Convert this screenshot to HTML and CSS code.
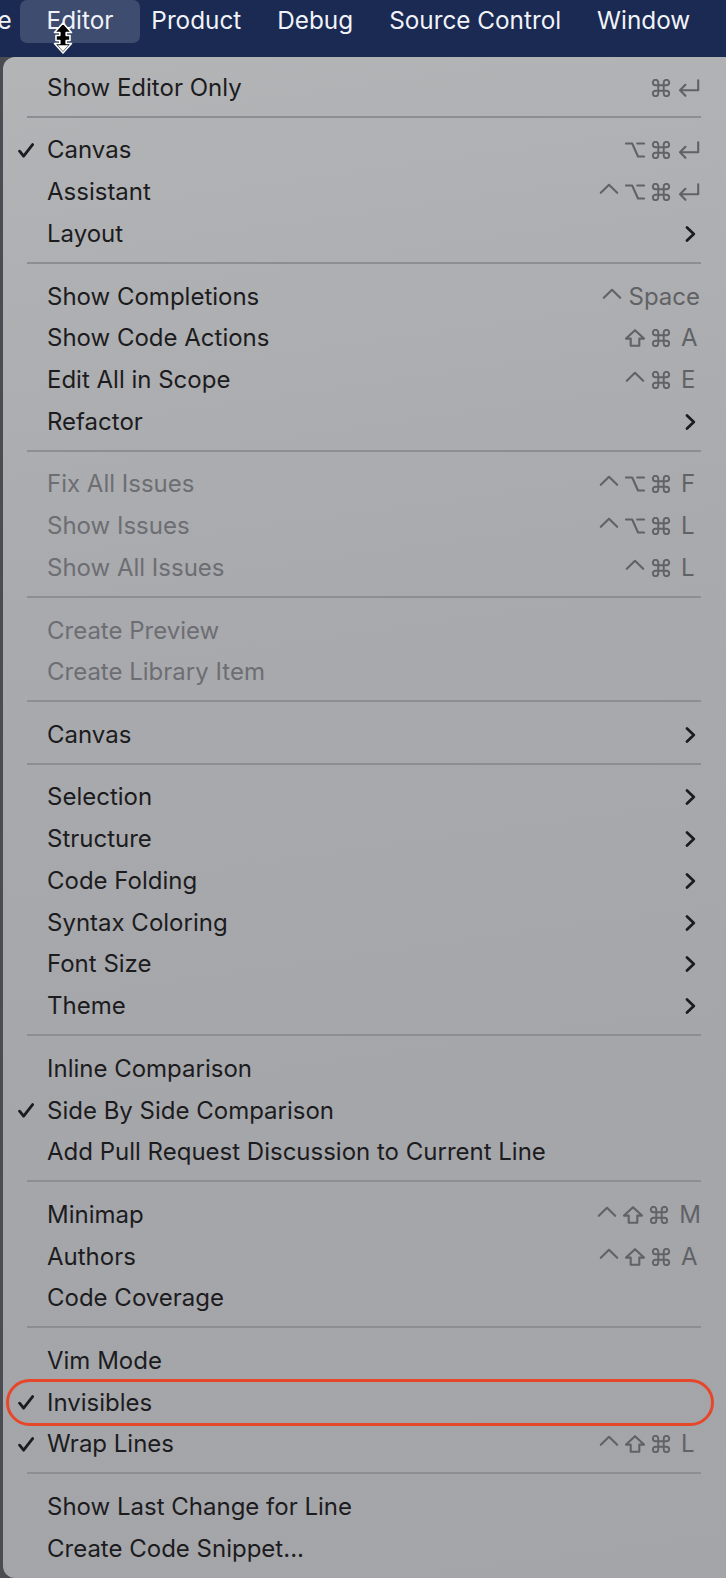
FILE: index.html
```html
<!DOCTYPE html>
<html lang="en">
<head>
    <meta charset="UTF-8">
    <meta name="viewport" content="width=device-width, initial-scale=1.0">
    <title>Editor menu</title>
    <link rel="stylesheet" href="styles.css">
</head>
<body>
    <svg class="defs" aria-hidden="true">
        <symbol id="i-cmd" viewBox="2.1 2.1 19.8 19.8">
            <path d="M18 3a3 3 0 0 0-3 3v12a3 3 0 0 0 3 3 3 3 0 0 0 3-3 3 3 0 0 0-3-3H6a3 3 0 0 0-3 3 3 3 0 0 0 3 3 3 3 0 0 0 3-3V6a3 3 0 0 0-3-3 3 3 0 0 0-3 3 3 3 0 0 0 3 3h12a3 3 0 0 0 3-3 3 3 0 0 0-3-3z"/>
        </symbol>
        <symbol id="i-opt" viewBox="0 0 20 18">
            <path d="M1 2.5H7.2L13 15.5H19M12.2 2.5H19"/>
        </symbol>
        <symbol id="i-shift" viewBox="0 0 20 18">
            <path d="M10 1.2L19 9.6H14.3V16.8H5.7V9.6H1Z"/>
        </symbol>
        <symbol id="i-ctrl" viewBox="0 0 20 18">
            <path d="M1.8 9.8L10 1.8L18.2 9.8"/>
        </symbol>
        <symbol id="i-ret" viewBox="0 0 22 18">
            <path d="M20.2 1.2V11.3H2M7.4 5.8L2 11.3L7.4 16.8"/>
        </symbol>
        <symbol id="i-chev" viewBox="0 0 11 16">
            <path d="M2 1.5L8.8 8L2 14.5"/>
        </symbol>
        <symbol id="i-check" viewBox="0 0 16 15">
            <path d="M1.6 8.2L5.6 13.2L14.6 1.6"/>
        </symbol>
    </svg>

    <div class="menubar">
        <span class="title first">Navigate</span>
        <span class="title open">Editor</span>
        <span class="title">Product</span>
        <span class="title">Debug</span>
        <span class="title">Source Control</span>
        <span class="title">Window</span>
        <svg class="cursor" viewBox="0 0 22 32">
            <path d="M11 1L19.5 10.5H14.2V13.5H18V18.5H14.2V21.5H19.5L11 31L2.5 21.5H7.8V18.5H4V13.5H7.8V10.5H2.5Z" fill="#000" stroke="#fff" stroke-width="1.6" stroke-linejoin="round"/>
            <path d="M11 29.2L5.6 23.2H16.4Z" fill="#fff"/>
        </svg>
    </div>

    <div class="menu">
        <div class="item"><span class="check"></span><span class="label">Show Editor Only</span>
            <span class="keys"><svg class="mod"><use href="#i-cmd"/></svg><svg class="ret"><use href="#i-ret"/></svg></span></div>
        <div class="sep"></div>

        <div class="item"><span class="check"><svg><use href="#i-check"/></svg></span><span class="label">Canvas</span>
            <span class="keys"><svg class="mod"><use href="#i-opt"/></svg><svg class="mod"><use href="#i-cmd"/></svg><svg class="ret"><use href="#i-ret"/></svg></span></div>
        <div class="item"><span class="check"></span><span class="label">Assistant</span>
            <span class="keys"><svg class="mod"><use href="#i-ctrl"/></svg><svg class="mod"><use href="#i-opt"/></svg><svg class="mod"><use href="#i-cmd"/></svg><svg class="ret"><use href="#i-ret"/></svg></span></div>
        <div class="item"><span class="check"></span><span class="label">Layout</span>
            <svg class="chev"><use href="#i-chev"/></svg></div>
        <div class="sep"></div>

        <div class="item"><span class="check"></span><span class="label">Show Completions</span>
            <span class="keys"><svg class="mod"><use href="#i-ctrl"/></svg><span class="key wide">Space</span></span></div>
        <div class="item"><span class="check"></span><span class="label">Show Code Actions</span>
            <span class="keys"><svg class="mod"><use href="#i-shift"/></svg><svg class="mod"><use href="#i-cmd"/></svg><span class="key">A</span></span></div>
        <div class="item"><span class="check"></span><span class="label">Edit All in Scope</span>
            <span class="keys"><svg class="mod"><use href="#i-ctrl"/></svg><svg class="mod"><use href="#i-cmd"/></svg><span class="key">E</span></span></div>
        <div class="item"><span class="check"></span><span class="label">Refactor</span>
            <svg class="chev"><use href="#i-chev"/></svg></div>
        <div class="sep"></div>

        <div class="item off"><span class="check"></span><span class="label">Fix All Issues</span>
            <span class="keys"><svg class="mod"><use href="#i-ctrl"/></svg><svg class="mod"><use href="#i-opt"/></svg><svg class="mod"><use href="#i-cmd"/></svg><span class="key">F</span></span></div>
        <div class="item off"><span class="check"></span><span class="label">Show Issues</span>
            <span class="keys"><svg class="mod"><use href="#i-ctrl"/></svg><svg class="mod"><use href="#i-opt"/></svg><svg class="mod"><use href="#i-cmd"/></svg><span class="key">L</span></span></div>
        <div class="item off"><span class="check"></span><span class="label">Show All Issues</span>
            <span class="keys"><svg class="mod"><use href="#i-ctrl"/></svg><svg class="mod"><use href="#i-cmd"/></svg><span class="key">L</span></span></div>
        <div class="sep"></div>

        <div class="item off"><span class="check"></span><span class="label">Create Preview</span></div>
        <div class="item off"><span class="check"></span><span class="label">Create Library Item</span></div>
        <div class="sep"></div>

        <div class="item"><span class="check"></span><span class="label">Canvas</span>
            <svg class="chev"><use href="#i-chev"/></svg></div>
        <div class="sep"></div>

        <div class="item"><span class="check"></span><span class="label">Selection</span>
            <svg class="chev"><use href="#i-chev"/></svg></div>
        <div class="item"><span class="check"></span><span class="label">Structure</span>
            <svg class="chev"><use href="#i-chev"/></svg></div>
        <div class="item"><span class="check"></span><span class="label">Code Folding</span>
            <svg class="chev"><use href="#i-chev"/></svg></div>
        <div class="item"><span class="check"></span><span class="label">Syntax Coloring</span>
            <svg class="chev"><use href="#i-chev"/></svg></div>
        <div class="item"><span class="check"></span><span class="label">Font Size</span>
            <svg class="chev"><use href="#i-chev"/></svg></div>
        <div class="item"><span class="check"></span><span class="label">Theme</span>
            <svg class="chev"><use href="#i-chev"/></svg></div>
        <div class="sep"></div>

        <div class="item"><span class="check"></span><span class="label">Inline Comparison</span></div>
        <div class="item"><span class="check"><svg><use href="#i-check"/></svg></span><span class="label">Side By Side Comparison</span></div>
        <div class="item"><span class="check"></span><span class="label">Add Pull Request Discussion to Current Line</span></div>
        <div class="sep"></div>

        <div class="item"><span class="check"></span><span class="label">Minimap</span>
            <span class="keys"><svg class="mod"><use href="#i-ctrl"/></svg><svg class="mod"><use href="#i-shift"/></svg><svg class="mod"><use href="#i-cmd"/></svg><span class="key">M</span></span></div>
        <div class="item"><span class="check"></span><span class="label">Authors</span>
            <span class="keys"><svg class="mod"><use href="#i-ctrl"/></svg><svg class="mod"><use href="#i-shift"/></svg><svg class="mod"><use href="#i-cmd"/></svg><span class="key">A</span></span></div>
        <div class="item"><span class="check"></span><span class="label">Code Coverage</span></div>
        <div class="sep"></div>

        <div class="item"><span class="check"></span><span class="label">Vim Mode</span></div>
        <div class="item marked"><span class="check"><svg><use href="#i-check"/></svg></span><span class="label">Invisibles</span></div>
        <div class="item"><span class="check"><svg><use href="#i-check"/></svg></span><span class="label">Wrap Lines</span>
            <span class="keys"><svg class="mod"><use href="#i-ctrl"/></svg><svg class="mod"><use href="#i-shift"/></svg><svg class="mod"><use href="#i-cmd"/></svg><span class="key">L</span></span></div>
        <div class="sep"></div>

        <div class="item"><span class="check"></span><span class="label">Show Last Change for Line</span></div>
        <div class="item"><span class="check"></span><span class="label">Create Code Snippet...</span></div>
    </div>
</body>
</html>
```

FILE: styles.css
```css
html, body {
    height: 1578px;
}
body {
    margin: 0;
    overflow: hidden;
    background: #4b4c51;
    font-family: "Inter", "Liberation Sans", sans-serif;
    color: #1c1c1e;
}
.defs {
    position: absolute;
    width: 0;
    height: 0;
}

/* top menu bar */
.menubar {
    position: relative;
    height: 57px;
    background: #1a2a53;
    display: flex;
    align-items: flex-start;
    gap: 36px;
}
.title {
    height: 43px;
    padding-bottom: 4px;
    box-sizing: border-box;
    display: flex;
    align-items: center;
    font-size: 24.3px;
    font-weight: 400;
    color: #f1f3f8;
    white-space: nowrap;
}
.title.first {
    margin-left: -90px;
}
.title.open {
    padding: 0 27px 4px;
    margin: 0 -25px 0 -28px;
    border-radius: 7px;
    background: #3e4c70;
}
.cursor {
    position: absolute;
    left: 52px;
    top: 22px;
    width: 22px;
    height: 32px;
}

/* dropdown */
.menu {
    margin-left: 3px;
    width: 736px;
    padding: 10.1px 0 8px;
    box-sizing: border-box;
    border-radius: 12px;
    background: linear-gradient(172deg, #b3b4b6 0%, #a9aaad 35%, #a5a6aa 70%, #a4a5a9 100%);
}
.item {
    position: relative;
    height: 41.8px;
    display: flex;
    align-items: center;
    padding: 0 38px 0 15px;
    font-size: 24px;
    line-height: 1;
}
.item.off .label {
    color: #6d6e73;
}
.check {
    width: 29px;
    flex: none;
    display: flex;
    align-items: center;
}
.check svg {
    width: 16px;
    height: 15px;
    fill: none;
    stroke: #1c1c1e;
    stroke-width: 2.8;
    stroke-linecap: round;
    stroke-linejoin: round;
}
.label {
    flex: 1;
    white-space: nowrap;
}
.keys {
    display: flex;
    align-items: center;
    gap: 6px;
    color: #616266;
}
.keys svg {
    fill: none;
    stroke: #616266;
    stroke-width: 2.1;
    stroke-linecap: round;
    stroke-linejoin: round;
}
.mod {
    width: 20px;
    height: 18px;
}
.ret {
    width: 22px;
    height: 18px;
    margin: 0 1px;
}
.key {
    min-width: 20px;
    margin-left: 4px;
    font-size: 24px;
}
.key.wide {
    margin-left: 0;
    margin-right: 1px;
}
.chev {
    width: 11px;
    height: 16px;
    margin-right: 5px;
    fill: none;
    stroke: #1c1c1e;
    stroke-width: 2.7;
    stroke-linecap: round;
    stroke-linejoin: round;
}
.sep {
    height: 2px;
    margin: 7px 38px 11.7px 24px;
    background: #8d8e92;
}

/* the outlined row */
.item.marked::after {
    content: "";
    position: absolute;
    left: 3px;
    right: 25px;
    top: -2.5px;
    bottom: -2.5px;
    border: 3px solid #e6472b;
    border-radius: 24px;
}
```
